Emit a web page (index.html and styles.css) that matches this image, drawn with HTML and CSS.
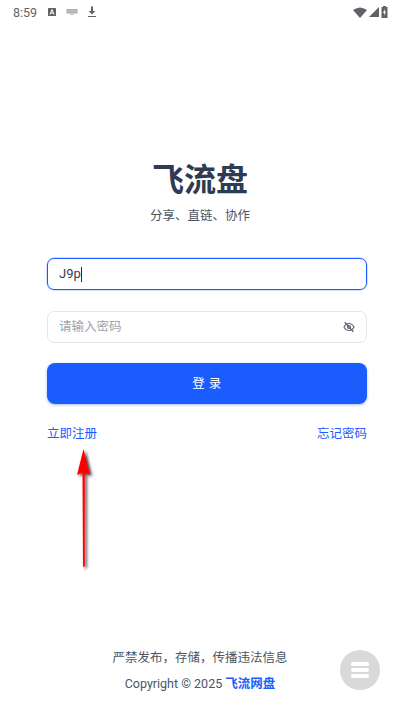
FILE: index.html
```html
<!DOCTYPE html>
<html>
<head>
    <title>飞流盘</title>
    <link rel="stylesheet" href="styles.css">
</head>
<body>
    <div class="status_bar">
        <div class="status_left">
            <span class="time">8:59</span>
            <svg class="status_icon" width="10" height="10" viewBox="0 0 10 10"><rect x="1" y="1" width="8" height="8" rx="0.5" fill="#5f6368"/><path d="M3 7.5 5 2.5 7 7.5M3.8 6h2.4" fill="none" stroke="#fff" stroke-width="1"/></svg>
            <svg class="status_icon" width="12" height="8" viewBox="0 0 12 8"><rect x="0.5" y="1" width="11" height="4.5" rx="0.5" fill="#a8abaf"/><path d="M2 2.2h8M2 3.8h8" stroke="#e4e5e6" stroke-width="0.7" stroke-dasharray="1 0.8"/><rect x="4" y="6" width="4" height="1" fill="#c4c6c8"/></svg>
            <svg class="status_icon" width="10" height="12" viewBox="0 0 10 12"><path d="M4 0.5h2v4.5h2.4L5 8.4 1.6 5H4z" fill="#5f6368"/><rect x="1" y="10" width="8" height="1" fill="#5f6368"/></svg>
        </div>
        <div class="status_right">
            <svg width="14" height="11" viewBox="0 0 14 11"><path d="M0 3Q7-2 14 3L7 11z" fill="#5f6368"/></svg>
            <svg width="10" height="10" viewBox="0 0 10 10"><path d="M10 0V10H0z" fill="#5f6368"/></svg>
            <svg width="7" height="12" viewBox="0 0 7 12"><path d="M2 0h3v1h1.500v11H.5V1H2z" fill="#5f6368"/><path d="M3.800 3 2 7h1.200v2.500L5 5.800H3.800z" fill="#fff"/></svg>
        </div>
    </div>

    <div class="header">
        <h1 class="heading">飞流盘</h1>
        <p class="subheading">分享、直链、协作</p>
    </div>

    <div class="container">
        <div class="field field_active">
            <span class="field_value">J9p</span><span class="caret"></span>
        </div>
        <div class="field">
            <span class="placeholder">请输入密码</span>
            <svg class="eye" width="12" height="12" viewBox="0 0 24 24" fill="none" stroke="#5b6472" stroke-width="2.400" stroke-linecap="round" stroke-linejoin="round">
                <path d="M2 12s3.600-7 10-7 10 7 10 7-3.600 7-10 7-10-7-10-7z"/>
                <circle cx="12" cy="12" r="3"/>
                <path d="M4 3l16 18"/>
            </svg>
        </div>

        <button class="login_btn">登 录</button>

        <div class="links">
            <a class="link">立即注册</a>
            <a class="link">忘记密码</a>
        </div>
    </div>

    <div class="footer">
        <p class="footer_line">严禁发布，存储，传播违法信息</p>
        <p class="footer_line copyright">Copyright © 2025 <b class="brand">飞流网盘</b></p>
    </div>

    <svg class="arrow" width="24" height="130" viewBox="0 0 24 130">
        <defs>
            <filter id="arrowShadow" x="-60%" y="-10%" width="220%" height="120%">
                <feDropShadow dx="2" dy="1.500" stdDeviation="1.600" flood-color="#000" flood-opacity="0.8"/>
            </filter>
        </defs>
        <path d="M9.500 3 L16 29 L10.800 26.500 L10.800 120 Q10 122 9 120 L8.500 26.500 L3 29 Z" fill="#f00" filter="url(#arrowShadow)"/>
    </svg>

    <div class="fab">
        <span></span><span></span><span></span>
    </div>
</body>
</html>
```

FILE: styles.css
```css
* {
    padding: 0;
    margin: 0;
    box-sizing: border-box;
}
body {
    position: relative;
    width: 400px;
    height: 710px;
    overflow: hidden;
    font-family: Roboto, "Noto Sans CJK SC", sans-serif;
    background-color: #ffffff;
    display: flex;
    flex-direction: column;
}
.status_bar {
    height: 24px;
    padding: 0 12px 0 13px;
    display: flex;
    justify-content: space-between;
    align-items: center;
    flex-shrink: 0;
}
.status_left,
.status_right {
    display: flex;
    align-items: center;
}
.status_left {
    gap: 9px;
}
.status_right {
    gap: 2px;
}
.time {
    font-size: 12.500px;
    color: #5f6368;
    margin-right: 1px;
}
.header {
    padding-top: 135px;
    text-align: center;
}
.heading {
    font-size: 32px;
    line-height: 42px;
    font-weight: 700;
    color: #2d3c52;
}
.subheading {
    margin-top: 5px;
    font-size: 12.500px;
    line-height: 20px;
    color: #4b5563;
}
.container {
    padding: 32px 33px 0 47px;
    display: flex;
    flex-direction: column;
}
.field {
    height: 32px;
    margin-top: 21px;
    padding: 0 11px;
    display: flex;
    align-items: center;
    border: 1px solid #e5e7eb;
    border-radius: 7px;
    font-size: 13px;
    line-height: 28px;
}
.field_active {
    margin-top: 0;
    border-color: #1b5cff;
    box-shadow: 0 0 0 0.5px rgba(27, 92, 255, 0.4);
}
.field_value {
    color: #374151;
}
.caret {
    width: 1px;
    height: 15px;
    background-color: #1f2937;
}
.placeholder {
    font-size: 12.500px;
    color: #9ca3af;
}
.eye {
    margin-left: auto;
}
.login_btn {
    height: 41px;
    margin-top: 20px;
    padding-bottom: 2px;
    border: none;
    border-radius: 8px;
    background-color: #1b5cff;
    color: #ffffff;
    font-family: inherit;
    font-size: 12.500px;
    letter-spacing: 0.500px;
    box-shadow: 0 1px 3px rgba(27, 92, 255, 0.4);
}
.links {
    margin-top: 21px;
    display: flex;
    justify-content: space-between;
}
.link {
    font-size: 12.500px;
    line-height: 18px;
    color: #1b5cff;
}
.footer {
    position: absolute;
    left: 0;
    right: 0;
    top: 648px;
    text-align: center;
}
.footer_line {
    font-size: 12.500px;
    line-height: 20px;
    color: #4b5563;
}
.copyright {
    margin-top: 6px;
}
.brand {
    color: #1b5cff;
    font-weight: 700;
}
.arrow {
    position: absolute;
    left: 74px;
    top: 446px;
}
.fab {
    position: absolute;
    left: 340px;
    top: 650px;
    width: 40px;
    height: 40px;
    border-radius: 50%;
    background-color: #d9d9d9;
    display: flex;
    flex-direction: column;
    align-items: center;
    justify-content: center;
    gap: 2px;
}
.fab span {
    width: 18px;
    height: 4px;
    border-radius: 2px;
    background-color: #ffffff;
}
```
